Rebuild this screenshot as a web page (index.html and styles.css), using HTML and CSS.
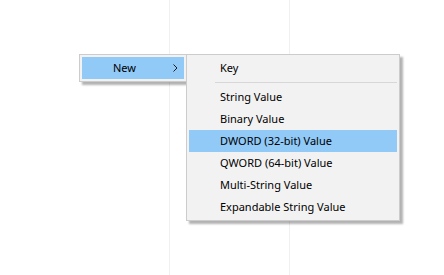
FILE: index.html
```html
<!DOCTYPE html>
<html lang=en>
	<head>
		<meta charset="utf-8">
		<title>New menu</title>
		<link rel="stylesheet" href="styles.css">
	</head>
	<body>
		<div class="list">
			<div class="col col-name"></div>
			<div class="col col-type"></div>
			<div class="col col-data"></div>
		</div>

		<div class="menu menu-main">
			<div class="item active">
				<span class="label">New</span>
				<svg class="arrow" width="5" height="8" viewBox="0 0 5 8">
					<path d="M0.5 0.5 L4 4 L0.5 7.5" fill="none" stroke="#1a1a1a" stroke-width="1"/>
				</svg>
			</div>
		</div>

		<div class="menu menu-sub">
			<div class="item">Key</div>
			<div class="sep"></div>
			<div class="item">String Value</div>
			<div class="item">Binary Value</div>
			<div class="item active">DWORD (32-bit) Value</div>
			<div class="item">QWORD (64-bit) Value</div>
			<div class="item">Multi-String Value</div>
			<div class="item">Expandable String Value</div>
		</div>
	</body>
</html>
```

FILE: styles.css
```css
body {
	margin: 0;
	width: 444px;
	height: 275px;
	overflow: hidden;
	background: #fff;
	font-family: 'Noto Sans', sans-serif;
	font-size: 11px;
	color: #000;
}

.list {
	display: flex;
	height: 275px;
}

.col {
	border-right: 1px solid #f0f0f0;
}

.col-name {
	width: 169px;
}

.col-type {
	width: 119px;
}

.col-data {
	flex: 1;
	border-right: none;
}

.menu {
	position: absolute;
	background: #f2f2f2;
	border: 1px solid #cccccc;
	padding: 2px;
	box-shadow: 3px 3px 2px rgba(0, 0, 0, 0.3);
}

.menu-main {
	left: 79px;
	top: 54px;
	width: 102px;
}

.menu-sub {
	left: 186px;
	top: 54px;
	width: 208px;
}

.item {
	box-sizing: border-box;
	display: flex;
	align-items: center;
	height: 22px;
	padding-left: 31px;
	padding-bottom: 1px;
	white-space: nowrap;
}

.item.active {
	background: #91c9f7;
}

.menu-main .item {
	justify-content: space-between;
	padding-right: 6px;
}

.sep {
	height: 1px;
	margin: 3px 0 3px 26px;
	background: #d7d7d7;
}
```
